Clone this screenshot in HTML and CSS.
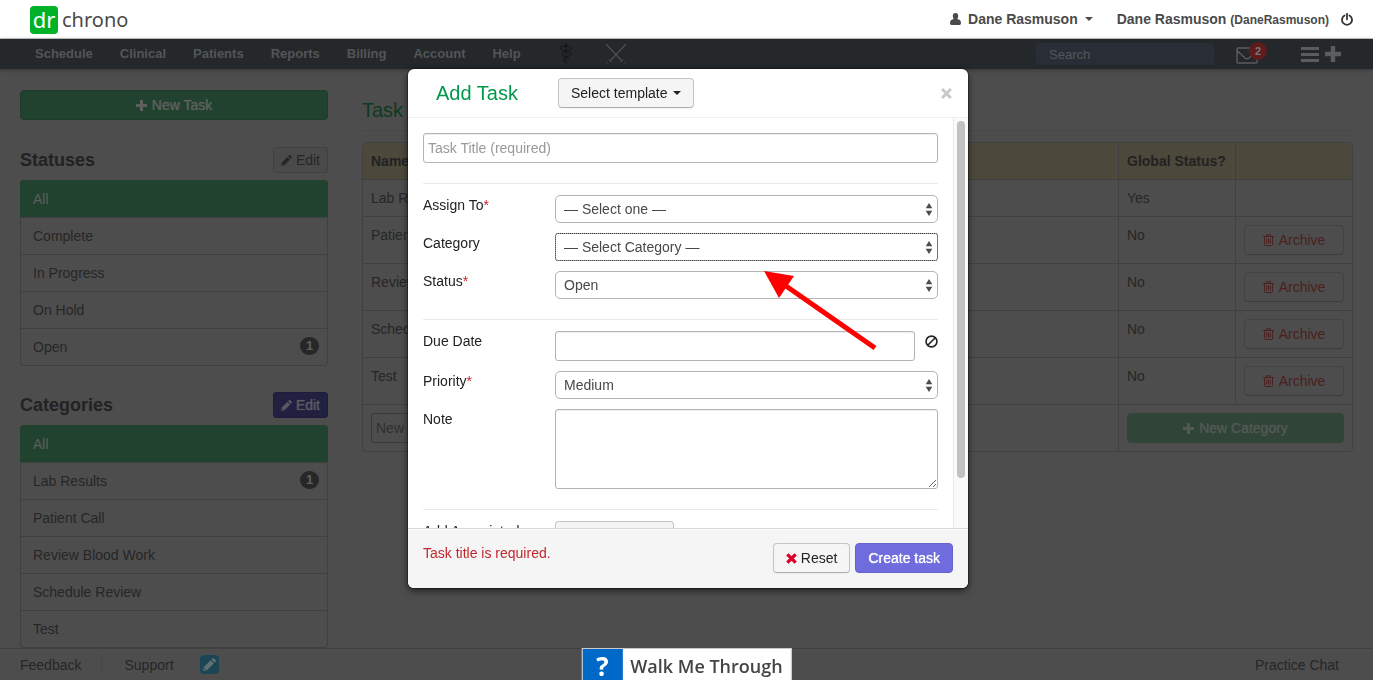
FILE: index.html
```html
<!DOCTYPE html>
<html lang="en">
<head>
<meta charset="utf-8">
<title>Task Categories</title>
<link rel="stylesheet" href="styles.css">
</head>
<body>
<svg class="sprite" aria-hidden="true">
  <symbol id="plus" viewBox="0 0 11 11"><path d="M4 0h3v4h4v3H7v4H4V7H0V4h4z"/></symbol>
  <symbol id="pencil" viewBox="0 0 12 12"><path d="M0 12l.9-3.800L7 2.100l2.900 2.900L3.800 11.100zM7.700 1.400L8.700.4q.7-.6 1.400 0l1.500 1.500q.6.700 0 1.400l-1 1zM1.500 9.200l-.3 1.600 1.600-.4z" fill-rule="evenodd"/></symbol>
  <symbol id="trash" viewBox="0 0 11 12"><path d="M0 2.500h11M3.500 2.500V.8h4v1.700M1.500 2.500v8q0 1 1 1h6q1 0 1-1v-8M3.700 4.500v5M5.500 4.500v5M7.300 4.500v5" fill="none" stroke="currentColor"/></symbol>
  <symbol id="updown" viewBox="0 0 8 13"><path d="M4 0l3.300 5.300H.7zM4 13l3.300-5.300H.7z"/></symbol>
</svg>

<header class="topbar">
  <a class="logo" href="#"><span class="logo-mark">dr</span><span class="logo-word">chrono</span></a>
  <div class="account">
    <a class="user" href="#">
      <svg class="i-user" viewBox="0 0 11 12"><path d="M5.500 0q2.700 0 2.700 3.200 0 1.800-1 2.800 3.800.6 3.800 4.200 0 1.800-1.600 1.800H1.600Q0 12 0 10.200 0 6.600 3.800 6 2.800 5 2.800 3.200 2.800 0 5.500 0z"/></svg>
      Dane Rasmuson <span class="caret"></span></a>
    <span class="whoami">Dane Rasmuson <small>(DaneRasmuson)</small></span>
    <a class="power" href="#" aria-label="Log out"><svg class="i-power" viewBox="0 0 12 13"><path d="M6 .8v5.500M3.500 2.500a5 5 0 1 0 5 0" fill="none" stroke="currentColor" stroke-width="1.800" stroke-linecap="round"/></svg></a>
  </div>
</header>

<nav class="nav">
  <div class="nav-links">
    <a href="#">Schedule</a><a href="#">Clinical</a><a href="#">Patients</a><a href="#">Reports</a><a href="#">Billing</a><a href="#">Account</a><a href="#">Help</a>
    <a class="nav-staff" href="#" aria-label="Medical"><svg class="i-staff" viewBox="0 0 14 22"><path d="M7 1v20M7 4Q2 2 1 5q1 2 6 3 5 1 5 3t-5 3q-3 1-3 2.500T7 19M7 4q5-2 6 1-1 2-6 3-4 1-4 3t4 3q3 1 3 2.500" fill="none" stroke="currentColor"/><circle cx="7" cy="2" r="1.500"/></svg></a>
    <a class="nav-tools" href="#" aria-label="Tools"><svg class="i-tools" viewBox="0 0 22 22"><path d="M1 1l16 17M21 1L5 18" fill="none" stroke="currentColor" stroke-width="1.600"/><path d="M3.500 16.500l3 3M18.500 16.500l-3 3M1.500 20.500l1.500-1.500M20.500 20.500L19 19" stroke="currentColor"/></svg></a>
  </div>
  <div class="nav-tray">
    <input class="search" type="text" placeholder="Search" aria-label="Search">
    <a class="mail" href="#" aria-label="Messages"><svg class="i-mail" viewBox="0 0 22 17"><path d="M2 1h18q1 0 1 1v13q0 1-1 1H2q-1 0-1-1V2q0-1 1-1zM1.500 4l7.500 7q2 1.600 4 0l7.500-7" fill="none" stroke="currentColor" stroke-width="1.400"/></svg><span class="mail-count">2</span></a>
    <a class="quick" href="#" aria-label="Quick add"><svg class="i-menu" viewBox="0 0 18 15"><path d="M0 0h18v3H0zM0 6h18v3H0zM0 12h18v3H0z"/></svg><svg class="i-add"><use href="#plus"/></svg></a>
  </div>
</nav>

<div class="page">
  <aside class="sidebar">
    <button class="btn btn-green" type="button"><svg class="i-plus"><use href="#plus"/></svg>New Task</button>
    <section>
      <div class="side-head"><h2>Statuses</h2><button class="btn btn-small" type="button"><svg class="i-pencil"><use href="#pencil"/></svg>Edit</button></div>
      <ul class="list">
        <li><a class="active" href="#">All</a></li>
        <li><a href="#">Complete</a></li>
        <li><a href="#">In Progress</a></li>
        <li><a href="#">On Hold</a></li>
        <li><a href="#">Open<span class="count">1</span></a></li>
      </ul>
    </section>
    <section>
      <div class="side-head"><h2>Categories</h2><button class="btn btn-small btn-violet-dim" type="button"><svg class="i-pencil"><use href="#pencil"/></svg>Edit</button></div>
      <ul class="list">
        <li><a class="active" href="#">All</a></li>
        <li><a href="#">Lab Results<span class="count">1</span></a></li>
        <li><a href="#">Patient Call</a></li>
        <li><a href="#">Review Blood Work</a></li>
        <li><a href="#">Schedule Review</a></li>
        <li><a href="#">Test</a></li>
      </ul>
    </section>
  </aside>
  <main class="main">
    <h1>Task Categories</h1>
    <table class="grid">
      <thead><tr><th>Name</th><th class="col-status">Global Status?</th><th class="col-action"></th></tr></thead>
      <tbody>
        <tr><td>Lab Results</td><td>Yes</td><td></td></tr>
        <tr><td>Patient Call</td><td>No</td><td><button class="btn btn-archive" type="button"><svg class="i-trash"><use href="#trash"/></svg>Archive</button></td></tr>
        <tr><td>Review Blood Work</td><td>No</td><td><button class="btn btn-archive" type="button"><svg class="i-trash"><use href="#trash"/></svg>Archive</button></td></tr>
        <tr><td>Schedule Review</td><td>No</td><td><button class="btn btn-archive" type="button"><svg class="i-trash"><use href="#trash"/></svg>Archive</button></td></tr>
        <tr><td>Test</td><td>No</td><td><button class="btn btn-archive" type="button"><svg class="i-trash"><use href="#trash"/></svg>Archive</button></td></tr>
        <tr><td><input class="new-name" type="text" placeholder="New category" aria-label="New category"></td><td colspan="2"><button class="btn btn-green btn-muted" type="button"><svg class="i-plus"><use href="#plus"/></svg>New Category</button></td></tr>
      </tbody>
    </table>
  </main>
</div>

<footer class="bottombar">
  <a class="feedback" href="#">Feedback</a><a class="support" href="#">Support</a>
  <a class="note-link" href="#" aria-label="Edit notes"><svg class="i-note"><use href="#pencil"/></svg></a>
  <a class="chat" href="#">Practice Chat</a>
</footer>

<div class="overlay">
  <form class="modal" role="dialog" aria-labelledby="modal-title">
    <div class="modal-head">
      <h3 id="modal-title">Add Task</h3>
      <button class="btn btn-light" type="button">Select template<span class="caret"></span></button>
      <button class="close" type="button" aria-label="Close"><svg class="i-close" viewBox="0 0 10 10"><path d="M1 1l8 8M9 1L1 9" stroke="currentColor" stroke-width="2.600"/></svg></button>
    </div>
    <div class="modal-body">
      <div class="fields">
        <input class="field" type="text" placeholder="Task Title (required)" aria-label="Task title">
        <hr>
        <div class="rows">
          <label for="assign">Assign To<span class="req">*</span></label>
          <div class="pick"><select id="assign"><option>— Select one —</option></select><svg class="i-updown"><use href="#updown"/></svg></div>
          <label for="category">Category</label>
          <div class="pick focused"><select id="category"><option>— Select Category —</option></select><svg class="i-updown"><use href="#updown"/></svg></div>
          <label for="status">Status<span class="req">*</span></label>
          <div class="pick"><select id="status"><option>Open</option></select><svg class="i-updown"><use href="#updown"/></svg></div>
        </div>
        <hr>
        <div class="rows">
          <label for="due">Due Date</label>
          <div class="due"><input class="field" id="due" type="text"><button class="clear" type="button" aria-label="Clear date"><svg class="i-ban" viewBox="0 0 12 12"><g fill="none" stroke="currentColor" stroke-width="1.500"><circle cx="6" cy="6" r="5"/><path d="M2.500 9.500l7-7"/></g></svg></button></div>
          <label for="priority">Priority<span class="req">*</span></label>
          <div class="pick"><select id="priority"><option>Medium</option></select><svg class="i-updown"><use href="#updown"/></svg></div>
          <label for="note">Note</label>
          <textarea class="field" id="note"></textarea>
        </div>
        <hr>
        <div class="rows">
          <span>Add Associated<br>Item</span>
          <div><button class="btn btn-light btn-item" type="button" aria-label="Select item"></button></div>
        </div>
      </div>
      <div class="track"><div class="thumb"></div></div>
    </div>
    <div class="modal-foot">
      <p>Task title is required.</p>
      <button class="btn btn-light btn-reset" type="reset"><svg class="i-reset" viewBox="0 0 10 10"><path d="M1.200 1.200l7.600 7.600M8.800 1.200L1.200 8.800" stroke="currentColor" stroke-width="3"/></svg>Reset</button>
      <button class="btn btn-violet" type="submit">Create task</button>
    </div>
    <svg class="pointer" viewBox="0 0 114 82" aria-hidden="true"><path d="M22 15l89 62" stroke="#f00" stroke-width="5"/><path d="M0 0l30 5-15 22z" fill="#f00"/></svg>
  </form>
</div>

<a class="walk" href="#"><span class="walk-mark">?</span><span class="walk-text">Walk Me Through</span></a>
</body>
</html>
```
FILE: styles.css
```css
* { box-sizing: border-box; }
html, body { height: 100%; }
body {
  margin: 0;
  overflow: hidden;
  background: #4d4d4d;
  color: #262626;
  font: 14px/20px "Liberation Sans", Arial, sans-serif;
}
a { color: inherit; text-decoration: none; }
h1, h2, h3, p, ul { margin: 0; padding: 0; }
ul { list-style: none; }
button, input, select, textarea { font: inherit; color: inherit; margin: 0; }
svg { fill: currentColor; flex: none; }
.sprite { display: none; }

/* top bar */
.topbar {
  display: flex;
  align-items: center;
  justify-content: space-between;
  height: 39px;
  padding: 0 20px 0 30px;
  background: #fff;
  border-bottom: 1px solid #c4c9c9;
  color: #4a4a4a;
}
.logo { display: flex; align-items: center; gap: 4px; padding-top: 1px; font: 20px/28px "Noto Sans", sans-serif; }
.logo-mark { width: 28px; height: 28px; border-radius: 4px; background: #00b228; color: #fff; text-align: center; font-size: 22px; line-height: 27px; }
.account { display: flex; align-items: center; font-weight: bold; }
.account small { font-size: 12px; }
.user { display: flex; align-items: center; gap: 7px; margin-right: 24px; }
.power { display: flex; margin-left: 12px; color: #333; }
.i-user { width: 11px; height: 12px; }
.i-power { width: 12px; height: 13px; }
.caret { display: inline-block; border: 4px solid transparent; border-top-color: currentColor; border-bottom: 0; vertical-align: middle; }

/* navigation */
.nav {
  display: flex;
  justify-content: space-between;
  align-items: center;
  height: 30px;
  padding: 0 32px 0 35px;
  background: #24282b;
  box-shadow: 0 1px 4px rgba(0, 0, 0, .3);
  color: #535556;
  font-size: 13px;
  font-weight: bold;
}
.nav-links { display: flex; align-items: center; gap: 27px; }
.nav-staff { display: flex; color: #15181a; margin: 0 5px 0 11px; }
.nav-tools { display: flex; color: #484a4c; }
.i-staff { width: 14px; height: 22px; }
.i-tools { width: 22px; height: 22px; }
.nav-tray { display: flex; align-items: center; }
.search { width: 178px; height: 22px; padding: 0 13px; border: 0; border-radius: 3px; background: #292e36; font-weight: normal; font-size: 13px; }
.search::placeholder { color: #54575b; opacity: 1; }
.mail { position: relative; display: flex; margin: 2px 43px 0 22px; color: #5a5c5e; }
.i-mail { width: 22px; height: 17px; }
.mail-count { position: absolute; left: 13px; top: -5px; width: 18px; height: 18px; border-radius: 9px; background: #601b1d; color: #777; font-size: 11px; line-height: 18px; text-align: center; }
.quick { display: flex; align-items: center; gap: 6px; color: #5a5c5e; }
.i-menu { width: 18px; height: 15px; }
.i-add { width: 16px; height: 16px; }

/* buttons */
.btn {
  display: inline-flex;
  align-items: center;
  justify-content: center;
  gap: 5px;
  height: 30px;
  padding: 0 12px;
  border: 1px solid transparent;
  border-radius: 4px;
  white-space: nowrap;
}
.btn-green { width: 100%; background: #21422e; border-color: #1d3c29; color: #5d605e; text-shadow: 0 0 1px #5d605e; }
.btn-muted { background: #304538; border-color: #304538; color: #525853; text-shadow: 0 0 1px #525853; }
.btn-small { gap: 4px; height: 26px; padding: 0 7px; background: #4a4a4a; border-color: #404040; color: #262626; border-radius: 3px; }
.btn-violet-dim { background: #222040; border-color: #1e1c3a; color: #5a5a66; text-shadow: 0 0 1px #5a5a66; }
.btn-archive { width: 100%; background: none; border-color: #434343; border-bottom-color: #3c3c3c; color: #4b2020; }
.btn-light { background: #f5f5f5; border-color: #c4c4c4; border-bottom-color: #b0b0b0; color: #222; box-shadow: 0 1px 1px rgba(0, 0, 0, .05); }
.btn-violet { background: #6f6cdd; border-color: #6663cf; color: #fff; text-shadow: 0 0 1px #fff; }
.btn-reset { gap: 4px; }
.i-plus { width: 11px; height: 11px; }
.i-pencil { width: 11px; height: 11px; }
.i-trash { width: 11px; height: 12px; }

/* sidebar and main */
.page { display: grid; grid-template-columns: 308px minmax(0, 1fr); column-gap: 34px; padding: 21px 20px 0; }
.side-head { display: flex; align-items: center; justify-content: space-between; padding-bottom: 7px; }
.sidebar { display: flex; flex-direction: column; gap: 26px; }
.sidebar > .btn { margin-bottom: 1px; }
h2 { color: #222; font-size: 18px; line-height: 26px; }
.list { border: 1px solid #404040; border-top: 0; border-radius: 4px; }
.list li + li { border-top: 1px solid #404040; }
.list a { display: flex; align-items: center; justify-content: space-between; height: 36px; padding: 0 8px 0 12px; }
.list .active { height: 37px; margin: 0 -1px; padding-left: 13px; border-radius: 4px 4px 0 0; background: #21422e; color: #5c5f5d; }
.count { width: 19px; height: 18px; margin-bottom: 2px; border-radius: 9px; background: #272727; color: #606060; font-size: 13px; font-weight: bold; line-height: 18px; text-align: center; }
h1 { padding-top: 5px; padding-bottom: 5px; border-bottom: 1px solid #484848; color: #0d3a22; font-size: 20px; font-weight: normal; line-height: 30px; margin-bottom: 11px; }
.grid { width: 100%; table-layout: fixed; border: 1px solid #404040; border-radius: 4px; border-collapse: separate; border-spacing: 0; }
.grid th { height: 36px; background: #4c483b; text-align: left; vertical-align: middle; padding: 0 8px; color: #222; }
.grid td { padding: 8px; border-top: 1px solid #404040; vertical-align: top; }
.grid th + th, .grid td + td { border-left: 1px solid #404040; }
.col-status, .col-action { width: 117px; }
.new-name { width: 220px; height: 30px; padding: 0 4px; border: 1px solid #3a3a3a; border-radius: 3px; background: transparent; }
.new-name::placeholder { color: #303030; opacity: 1; }
.grid td .btn { vertical-align: top; }

/* bottom bar */
.bottombar { position: fixed; inset: auto 0 0; display: flex; align-items: center; height: 32px; padding: 0 34px 0 20px; border-top: 1px solid #404040; background: #4d4d4d; }
.feedback { padding-right: 20px; border-right: 1px solid #484848; }
.support { margin: 0 26px 0 22px; }
.note-link { display: flex; align-items: center; justify-content: center; width: 19px; height: 19px; border-radius: 4px; background: #1d4654; color: #637076; }
.i-note { width: 13px; height: 13px; }
.chat { margin-left: auto; }

/* dialog */
.overlay { position: fixed; inset: 69px 0 auto 0; display: flex; justify-content: center; padding-left: 3px; }
.modal { position: relative; width: 560px; border-radius: 6px; background: #fff; color: #222; box-shadow: 0 3px 7px rgba(0, 0, 0, .6), 0 0 0 1px rgba(0, 0, 0, .3); }
.modal-head { display: flex; align-items: center; padding: 9px 16px 9px 28px; border-bottom: 1px solid #eee; }
.modal-head h3 { flex: 0 0 122px; color: #009a4a; font-size: 20px; font-weight: normal; }
.close { display: flex; margin-left: auto; padding: 0; border: 0; background: none; color: #c8c8c8; }
.i-close { width: 11px; height: 11px; }
.modal-body { display: flex; max-height: 410px; overflow: hidden; }
.fields { flex: 1; padding: 15px; }
.track { flex: none; width: 15px; padding: 3px; border-left: 1px solid #e8e8e8; background: #fafafa; }
.thumb { width: 8px; height: 357px; border-radius: 4px; background: #c1c1c1; }
hr { height: 1px; margin: 20px 0 11px; border: 0; background: #eaeaea; }
.rows { display: grid; grid-template-columns: 132px minmax(0, 1fr); row-gap: 10px; }
.req { color: #c9252d; }
.field { display: block; width: 100%; height: 30px; padding: 0 4px; border: 1px solid #b4b4b4; border-radius: 3px; background: #fff; box-shadow: inset 0 1px 1px rgba(0, 0, 0, .07); }
.field::placeholder { color: #999; opacity: 1; }
textarea.field { height: 80px; }
.pick { position: relative; }
.pick select { display: block; width: 100%; height: 28px; padding: 0 24px 0 8px; appearance: none; border: 1px solid #b4b4b4; border-radius: 5px; background: #fff; color: #484848; }
.focused select { border-radius: 3px; outline: 1px dotted #333; outline-offset: -1px; }
.i-updown { position: absolute; right: 5px; top: 8px; width: 8px; height: 13px; color: #4d4d4d; pointer-events: none; }
.due { display: flex; gap: 10px; }
.clear { display: flex; padding: 4px 0; border: 0; background: none; color: #222; }
.i-ban { width: 13px; height: 13px; }
.btn-item { width: 119px; }
.modal-foot { display: flex; gap: 5px; padding: 14px 15px 15px; border-top: 1px solid #d8d8d8; border-radius: 0 0 6px 6px; background: #f5f5f5; box-shadow: inset 0 1px 0 #fff; }
.modal-foot p { flex: 1; color: #c0272d; }
.i-reset { width: 11px; height: 11px; color: #dc0028; }
.pointer { position: absolute; left: 356px; top: 202px; width: 114px; height: 82px; }

/* help launcher */
.walk { position: fixed; bottom: 0; left: 50%; transform: translateX(-50%); display: flex; height: 32px; border: 1px solid #c8c8c8; border-bottom: 0; background: #fff; color: #444; font: 600 18px/34px "Open Sans", sans-serif; white-space: nowrap; }
.walk-mark { width: 40px; background: #0069c8; color: #fff; font-size: 26px; font-weight: bold; text-align: center; }
.walk-text { padding: 0 8px; }
```
